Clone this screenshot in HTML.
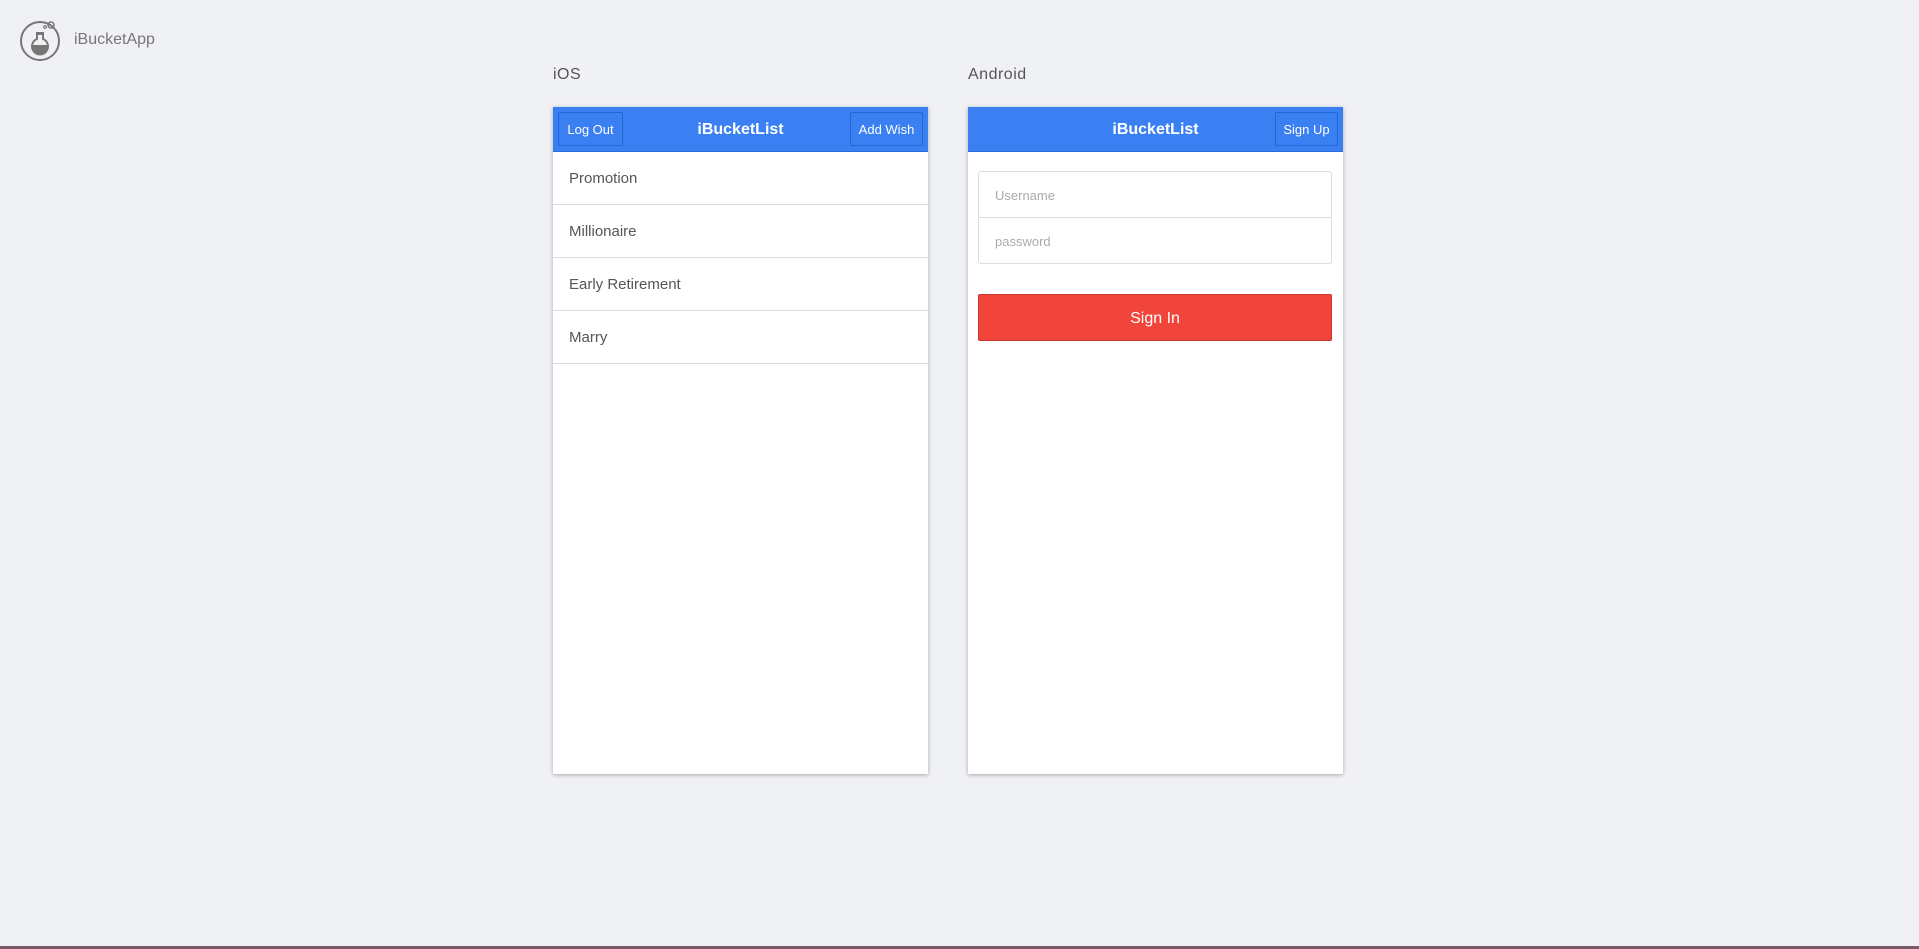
<!DOCTYPE html>
<html><head><style>
body{margin:0;width:1919px;height:949px;background:#f0f1f5;font-family:"Liberation Sans",sans-serif;position:relative;overflow:hidden}
.abs{position:absolute}
.panel{position:absolute;top:107px;width:375px;height:667px;background:#fff;box-shadow:0 1px 4px rgba(0,0,0,.3)}
.hdr{position:absolute;left:0;top:0;right:0;height:44px;background:#3a80f3;border-bottom:1px solid #2c6cd8;color:#fff}
.title{position:absolute;left:0;right:0;top:1px;line-height:44px;text-align:center;font-weight:bold;font-size:16px}
.btn{position:absolute;top:5px;height:32px;border:1px solid #2466d2;border-radius:2px;color:#fff;font-size:13px;line-height:34px;text-align:center}
.row{height:52px;border-bottom:1px solid #dcdcdc;line-height:54px;padding-left:16px;font-size:15px;color:#555}
.lbl{position:absolute;top:66px;font-size:16px;color:#555;letter-spacing:.5px}
</style></head><body>
<svg class="abs" style="left:18px;top:18px" width="44" height="44" viewBox="0 0 44 44" fill="none" stroke="#777" stroke-width="2">
<circle cx="22" cy="23" r="19"/><circle cx="33" cy="7" r="3" stroke-width="1.5"/><circle cx="27" cy="9" r="1.3" stroke-width="1.2"/>
<path d="M19 16v5a8 8 0 1 0 6 0v-5z"/><path d="M15 28a7 7 0 0 0 14 0z" fill="#777"/><path d="M18 15h8"/>
</svg>
<div class="abs" style="left:74px;top:31px;font-size:16px;color:#777">iBucketApp</div>
<div class="lbl" style="left:553px">iOS</div>
<div class="lbl" style="left:968px">Android</div>
<div class="panel" style="left:553px">
<div class="hdr"><div class="title">iBucketList</div>
<div class="btn" style="left:5px;width:63px">Log Out</div>
<div class="btn" style="right:5px;width:71px">Add Wish</div></div>
<div style="position:absolute;top:45px;left:0;right:0">
<div class="row">Promotion</div><div class="row">Millionaire</div><div class="row">Early Retirement</div><div class="row">Marry</div></div>
</div>
<div class="panel" style="left:968px">
<div class="hdr"><div class="title">iBucketList</div>
<div class="btn" style="right:5px;width:61px">Sign Up</div></div>
<div style="position:absolute;left:10px;top:64px;width:352px;height:91px;border:1px solid #ddd;border-radius:3px">
<div style="height:45px;border-bottom:1px solid #ddd;line-height:47px;padding-left:16px;font-size:13px;color:#aaa">Username</div>
<div style="line-height:47px;padding-left:16px;font-size:13px;color:#aaa">password</div></div>
<div style="position:absolute;left:10px;top:187px;width:352px;height:45px;background:#f1453b;border:1px solid #c8352c;border-radius:2px;color:#fff;text-align:center;line-height:47px;font-size:16px">Sign In</div>
</div>
<div class="abs" style="left:0;top:946px;width:1919px;height:3px;background:#7a5a68"></div>
</body></html>
